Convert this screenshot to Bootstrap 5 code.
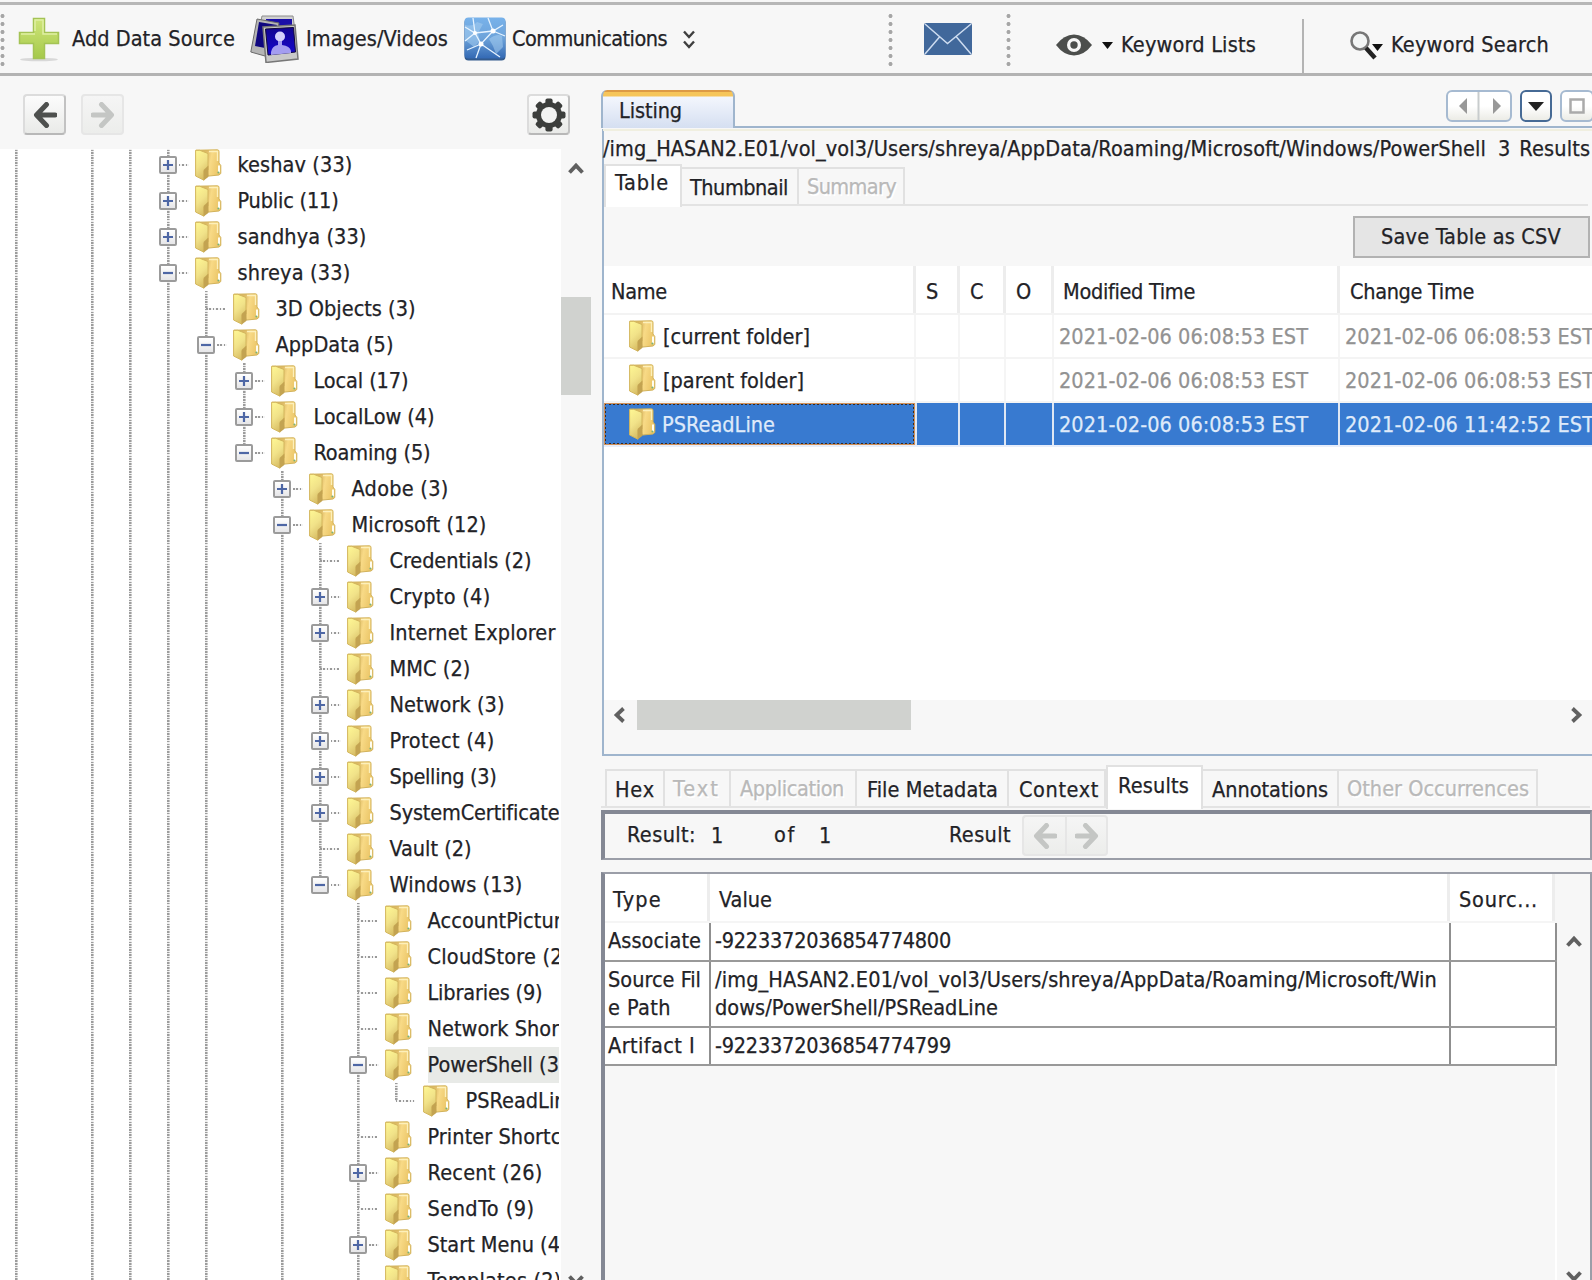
<!DOCTYPE html>
<html lang="en">
<head>
<meta charset="utf-8">
<title>Autopsy</title>
<link href="https://cdn.jsdelivr.net/npm/bootstrap@5.3.0/dist/css/bootstrap.min.css" rel="stylesheet">
<style>
body{width:1592px;height:1280px;overflow:hidden;background:#f7f7f7;color:#222226;font:21.5px/28px "DejaVu Sans Condensed","DejaVu Sans",sans-serif;font-stretch:condensed;white-space:nowrap}
svg{display:block;flex:none}
.t{display:inline-block;line-height:28px;-webkit-text-stroke:.25px currentColor}
.dim{color:#b9b9b9;text-shadow:1.5px 1.5px #fff}
/* toolbar */
.toolbar{margin-top:2px;border-top:3px solid #b7b7b7;border-bottom:3px solid #b3b3b3;height:74px;display:grid;grid-template-columns:18px 54px 178px 56px 158px 48px 171px 205px 36px 82px 50px 65px 181px 48px 41px 1fr;align-items:center}
.toolbar>*{height:66px;display:flex;align-items:center}
.toolbar>.grip{background:radial-gradient(circle,#a6a6a6 1.7px,transparent 2.3px) 0 0/5px 8px repeat-y;height:56px;align-self:start;margin-top:7px}
.toolbar>.low{padding-top:12px}
.toolbar>.vsep{width:2px;background:#b4b4b4;height:54px;align-self:end}
/* left side */
.side{width:601px;flex:none}
.side-head{height:73px;padding:18px 31px 0 23px}
.ibtn{width:43px;height:41px;border:2px solid #dcdcdc;border-right-color:#c2c2c2;border-bottom-color:#b8b8b8;border-radius:4px;background:linear-gradient(#fcfcfc,#e9eae8);display:flex;align-items:center;justify-content:center}
.ibtn.off{border-color:#e6e6e6;background:linear-gradient(#f5f5f5,#ecedeb)}
.arr-on{color:#4e504e}
.arr-off{color:#c4c6c4}
.flip-x{transform:scaleX(-1)}
.flip-y{transform:scaleY(-1)}
.tree{width:561px;height:1131px;overflow:hidden;background:#fff;border-right:2px solid #fff}
.tree-rows{margin:-2px 0 0 -3px}
.trow{height:36px;display:flex;align-items:center}
.cell{width:38px;height:36px;flex:none;display:flex;align-items:center;background-repeat:no-repeat}
.ln{background-image:repeating-linear-gradient(to bottom,#9c9c9c 0 1.5px,#eee 1.5px 2.571px);background-size:2.6px 100%;background-position:17.7px 0}
.ln.half{background-size:2.6px 18px}
.dots{height:2px;flex:none;background:repeating-linear-gradient(to right,#999 0 1.5px,#f4f4f4 1.5px 3.4px)}
.stub{width:19px;margin-left:19px}
.dash3{width:10px;margin-left:2px}
.box{width:18px;height:18px;border:2px solid #9b9b9b;border-radius:2px;background:linear-gradient(#fff,#e6e6e8);margin-left:9.500px;flex:none}
.leafdir{margin-left:8px}
.lbl{margin-left:15.500px;height:36px;line-height:35px;flex:none}
.lbl .t{line-height:35px}
.lbl.on{background:#e8eae7}
.vbar{width:30px;height:1131px;overflow:hidden}
.vthumb{height:98px;margin-top:123px;background:#d0d2cf;flex:none}
/* right side */
.work{width:991px;flex:none}
.tabstrip{height:53px;padding-top:14px}
.doc-tab{width:134px;height:38px;border:2px solid #9fb5cd;border-bottom:0;border-top:0;border-radius:6px 6px 0 0;background:linear-gradient(#dd9a45 0 2px,#f6c55a 2px 6px,#f3f6fd 7px,#d5dff1 100%);padding:6.500px 0 0 16px}
.tab-rest{border-bottom:2px solid #9fb5cd;flex:1;height:38px}
.navb{height:32px;border:2px solid #a6bad1;border-radius:6px;background:linear-gradient(#fff 50%,#ecece6);display:flex;align-items:center;justify-content:center}
.listing{border-left:2px solid #9fb5cd;border-bottom:2px solid #9fb5cd;height:627px;margin-left:1px}
.pathline{height:36px;padding-top:4px;border-top:2px solid #f0efe0;margin-left:-1px}
.subtabs{display:flex;align-items:flex-end;border-bottom:2px solid #e3e3e3}
.stab{border:2px solid #e1e1e1;border-left:0;border-bottom:0;height:37px;flex:none}
.stab.act{background:#fff;height:43px;margin-bottom:-3px;border-left:2px solid #e1e1e1}
.csv{width:237px;height:42px;border:2px solid #b2b2b2;background:#e5e5e5;border-radius:0;padding:0 0 1px 26px;margin:0 2px 8px auto}
.csv .t{line-height:34px}
.grid-h,.grid-r{display:grid;grid-template-columns:312px 44px 46px 48px 286px 1fr}
.grid-h{height:49px;background:#fff;border-bottom:2px solid #f3f3f3}
.grid-h>div{border-right:3px solid #ededed;padding:12px 0 0 10px;overflow:hidden}
.grid-h>div:last-child,.grid-r>div:last-child{border-right:0}
.grid-r{height:44px;background:#fff;border-bottom:2px solid #f4f4f4}
.grid-r>div{border-right:2px solid #f5f5f5;padding:8px 0 0 5px;overflow:hidden}
.grid-r>div:first-child{padding:5px 0 0 25px;display:flex;gap:7px}
.grid-r .t{color:#929292}
.grid-r .nm{color:#222226;margin-top:3px}
.grid-r.sel{background:#387ad0;border-bottom-color:#e8eefa}
.grid-r.sel>div{border-right-color:#dfe7f3}
.grid-r.sel .t{color:#dfeafa}
.grid-r.sel>div:first-child{border:2px dotted #3a2a20;outline:1px solid #d09058;outline-offset:-1px;padding:3px 0 0 23px;gap:6px;box-shadow:2px 0 #dfe7f3;margin-right:1px;overflow:visible}
.hbar{height:54px;background:#f7f7f7;padding-left:9px}
.lower{padding-top:11px}
.resbar{height:50px;border:2px solid #9b9ea8;border-top:4px solid #848894;border-left:4px solid #848894;display:grid;grid-template-columns:106px 61px 47px 108px 73px 43px 43px;margin-top:2px;padding-left:22px}
.resbox{border:2px solid #9b9ea8;border-left:4px solid #848894;border-bottom:0;margin-top:12px;height:412px}
.rh{height:49px;width:950px;background:#fff;display:grid;grid-template-columns:105px 740px 105px;border-bottom:2px solid #f5f5f5}
.rh>div{border-right:3px solid #ededed;padding:12px 0 0 9px}
.rh>div:first-child{padding-left:8px}
.rr{width:952px;background:#fff;display:grid;grid-template-columns:106px 740px 106px;border-bottom:2px solid #999}
.rr>div{border-right:2px solid #8f8f8f;padding:4px 0 0 3px}
.rr>div+div{padding-left:4px}
</style>
<script src="https://cdn.jsdelivr.net/npm/bootstrap@5.3.0/dist/js/bootstrap.bundle.min.js"></script>
</head>
<body>
<svg width="0" height="0" class="position-absolute">
<defs>
<linearGradient id="fa" x1="0" y1="0" x2="0.4" y2="1"><stop offset="0" stop-color="#fff894"/><stop offset=".55" stop-color="#f1e289"/><stop offset="1" stop-color="#d9bf66"/></linearGradient>
<linearGradient id="fb" x1="0" y1="0" x2="1" y2="0.2"><stop offset="0" stop-color="#c9a950"/><stop offset=".45" stop-color="#dfbc68"/><stop offset=".65" stop-color="#f8da86"/><stop offset="1" stop-color="#ecc76a"/></linearGradient>
<linearGradient id="gp" x1="0" y1="0" x2="0" y2="1"><stop offset="0" stop-color="#cfe57a"/><stop offset="1" stop-color="#a5c94a"/></linearGradient>
<linearGradient id="gb" x1="0" y1="0" x2="0" y2="1"><stop offset="0" stop-color="#78b2ea"/><stop offset=".5" stop-color="#6da3da"/><stop offset="1" stop-color="#3369b4"/></linearGradient>
<linearGradient id="gi" x1="0" y1="0" x2="0" y2="1"><stop offset="0" stop-color="#12058f"/><stop offset="1" stop-color="#1608cf"/></linearGradient>
<symbol id="folder" viewBox="0 0 27 32"><path d="M1 1.200 22.500.8Q24 .8 24 2.500V14l1.800 2.500v8L24 26l-10 1L8 25z" fill="url(#fb)" stroke="#d2b25a" stroke-width="1"/><path d="M14 2.500h8.500V12" fill="none" stroke="#fdf0ba" stroke-width="1.400"/><path d="M.6 1.300h4.200L13 4.500v16.500L9 22v9.200L.6 27z" fill="url(#fa)" stroke="#d3b65c" stroke-width="1"/><path d="M13.400 16.500 8.600 21v10.400l5-3.600z" fill="#c3a351"/><path d="M24 16.500v7" stroke="#fffdf0" stroke-width="2"/><circle cx="23.400" cy="23.500" r="1" fill="#79b27a"/></symbol>
<symbol id="up" viewBox="0 0 16 12"><path d="M1.500 10.500 8 3.600l6.500 6.900" fill="none" stroke="#606060" stroke-width="3.800"/></symbol>
<symbol id="back" viewBox="0 0 24 26"><path d="M22 13H4M13.500 2.500 3.500 13l10 10.500" fill="none" stroke="currentColor" stroke-width="5" stroke-linecap="round" stroke-linejoin="round"/></symbol>
</defs>
</svg>

<header class="toolbar">
  <div class="grip"></div>
  <div><svg width="42" height="46" viewBox="0 0 42 46"><ellipse cx="21" cy="43.500" rx="19" ry="1.800" fill="#d8d8d8"/><path d="M15.500 2.500h11v14h14v11h-14v15h-11v-15h-14v-11h14z" fill="url(#gp)" stroke="#a4c355" stroke-width="1.500"/><path d="M17 15V4h8v14h14M3 18h14" fill="none" stroke="#e0f0a4" stroke-width="1.500"/></svg></div>
  <div><span class="t" data-w="163">Add Data Source</span></div>
  <div><svg width="49" height="48" viewBox="0 0 49 48"><path d="M12 1 43 1 45 16 9 15z" fill="#cfcfcf" stroke="#8d8d8d"/><path d="M16 4 42 4v9H16z" fill="#1b0fa8"/><path d="M7 4 29 8 22 43 .8 37z" fill="#b5b5b5" stroke="#6b6b6b"/><path d="M9 7 27 10 20 34 5 31z" fill="#0f067f"/><path d="M13 12 45 10 48 44 16 47.500z" fill="#c9c9c9" stroke="#777" stroke-width="1.500"/><path d="M15.500 14 43.500 12.500 45.500 37 18 40z" fill="url(#gi)" stroke="#120838"/><circle cx="30" cy="21.500" r="5" fill="#d5d2fb"/><path d="M28 26h4v4q8 1 9 6v2l-20 2v-3q1-6 7-7z" fill="#a39df0"/></svg></div>
  <div><span class="t" data-w="142">Images/Videos</span></div>
  <div><svg width="42" height="44" viewBox="0 0 42 44"><rect x=".5" y="1.500" width="41" height="42" rx="4" fill="#335b8e"/><rect x=".5" y=".5" width="41" height="41" rx="4" fill="url(#gb)"/><path d="M1 8q8 2 12-3l6 2-5 9 2 8-6 6-9-7zM25 22q8-6 13-3l1 11-7 7-3-8z" fill="#a6cdf0" opacity=".55"/><path d="M1 10 11 16 29 14 39 8M11 16 9 1M11 16 17 27 29 14 24 1M17 27 3 33M17 27 12 41M17 27 36 40M29 14 41 19M11 16 1 24" fill="none" stroke="#e6f3ff" stroke-width="1.300"/><g fill="#fff"><circle cx="11" cy="16" r="2"/><circle cx="29" cy="14" r="2.500"/><circle cx="17" cy="27" r="2.500"/></g></svg></div>
  <div><span class="t" data-w="155">Communications</span></div>
  <div><svg width="12" height="19" viewBox="0 0 12 19"><path d="m1 1.500 5 5.500 5-5.500M1 11.500l5 5.500 5-5.500" fill="none" stroke="#404040" stroke-width="2.400"/></svg></div>
  <div class="grip"></div>
  <div><svg width="48" height="32" viewBox="0 0 48 32"><rect width="48" height="32" rx="2" fill="#41689b"/><path d="m1 1 22.500 19.500L47 1M1 31l14.500-17M47 31 32.500 14" fill="none" stroke="#cddcf0" stroke-width="1.500"/></svg></div>
  <div class="grip"></div>
  <div class="low"><svg width="36" height="22" viewBox="0 0 36 22"><path d="M0 11Q8 .5 18 .5T36 11Q28 21.500 18 21.500T0 11z" fill="#4c4e4c"/><circle cx="18" cy="11" r="7" fill="#f7f7f7"/><circle cx="18" cy="11" r="3.700" fill="#4c4e4c"/></svg><svg class="ms-auto me-2" width="11" height="7"><path d="M0 0h11L5.500 7z" fill="#111"/></svg></div>
  <div class="low"><span class="t" data-w="135">Keyword Lists</span></div>
  <div class="vsep"></div>
  <div class="low"><svg width="34" height="29" viewBox="0 0 34 29"><circle cx="10" cy="10" r="8.500" fill="#f3f5f5" stroke="#777" stroke-width="2.600"/><path d="m16 17 9 10" stroke="#222" stroke-width="4.500"/><path d="M22 13h11l-5.500 7z" fill="#111"/></svg></div>
  <div class="low"><span class="t" data-w="158">Keyword Search</span></div>
</header>

<main class="d-flex">
<aside class="side">
  <div class="side-head d-flex">
    <div class="ibtn arr-on"><svg width="24" height="26"><use href="#back"/></svg></div>
    <div class="ibtn off arr-off" style="margin-left:15px"><svg class="flip-x" width="24" height="26"><use href="#back"/></svg></div>
    <div class="ibtn ms-auto"><svg width="34" height="34" viewBox="-17 -17 34 34"><g fill="#3c3e3c"><g id="tooth"><rect x="-3.600" y="-16.500" width="7.200" height="33" rx="2"/><rect x="-16.500" y="-3.600" width="33" height="7.200" rx="2"/></g><use href="#tooth" transform="rotate(45)"/><circle r="13"/></g><circle r="8" fill="#f2f3f2"/></svg></div>
  </div>
  <div class="d-flex">
    <div class="tree"><div class="tree-rows" id="tree"></div></div>
    <div class="vbar d-flex flex-column align-items-center">
      <svg width="16" height="12" style="margin-top:13px"><use href="#up"/></svg>
      <div class="vthumb w-100"></div>
      <svg class="flip-y" width="16" height="12" style="margin-top:880px"><use href="#up"/></svg>
    </div>
  </div>
</aside>

<section class="work">
  <div class="tabstrip d-flex">
    <div class="doc-tab"><span class="t" data-w="63">Listing</span></div>
    <div class="tab-rest d-flex justify-content-end">
      <div class="navb" style="width:66px"><svg width="52" height="28" viewBox="0 0 52 28"><path d="M14 6v16L6 14zM40 6v16l8-8z" fill="#989898"/><path d="M25.500 0v28" stroke="#c8cccd" stroke-width="2"/></svg></div>
      <div class="navb" style="width:32px;margin-left:8px;border-color:#466a95"><svg width="16" height="9"><path d="M0 0h16L8 9z" fill="#222"/></svg></div>
      <div class="navb" style="width:34px;margin-left:8px;margin-right:-2px"><svg width="17" height="17"><rect x="1.500" y="1.500" width="13" height="13" fill="none" stroke="#aaa" stroke-width="2.500"/></svg></div>
    </div>
  </div>
  <div class="listing">
    <div class="pathline"><span class="t" data-w="883">/img_HASAN2.E01/vol_vol3/Users/shreya/AppData/Roaming/Microsoft/Windows/PowerShell</span><span class="t" style="margin-left:12px">3</span><span class="t" data-w="71" style="margin-left:9px">Results</span></div>
    <div class="subtabs" style="height:41px;margin-right:4px">
      <div class="stab act" style="width:78px;padding:3px 0 0 9px"><span class="t" data-w="54">Table</span></div>
      <div class="stab" style="width:117px;padding:5px 0 0 8px"><span class="t" data-w="98">Thumbnail</span></div>
      <div class="stab" style="width:106px;padding:4px 0 0 8px"><span class="t dim" data-w="89">Summary</span></div>
    </div>
    <div style="height:10px"></div>
    <button class="csv d-block text-start text-reset"><span class="t" data-w="180">Save Table as CSV</span></button>
    <div class="grid-h"><div style="padding-left:7px"><span class="t" data-w="56">Name</span></div><div><span class="t" data-w="14">S</span></div><div><span class="t" data-w="15">C</span></div><div><span class="t" data-w="17">O</span></div><div style="padding-left:9px"><span class="t" data-w="132">Modified Time</span></div><div><span class="t" data-w="124">Change Time</span></div></div>
    <div class="grid-r"><div><svg width="27" height="32"><use href="#folder"/></svg><span class="t nm" data-w="147">[current folder]</span></div><div></div><div></div><div></div><div><span class="t" data-w="249">2021-02-06 06:08:53 EST</span></div><div><span class="t" data-w="249">2021-02-06 06:08:53 EST</span></div></div>
    <div class="grid-r"><div><svg width="27" height="32"><use href="#folder"/></svg><span class="t nm" data-w="141">[parent folder]</span></div><div></div><div></div><div></div><div><span class="t" data-w="249">2021-02-06 06:08:53 EST</span></div><div><span class="t" data-w="249">2021-02-06 06:08:53 EST</span></div></div>
    <div class="grid-r sel"><div><svg width="27" height="32"><use href="#folder"/></svg><span class="t nm" data-w="113">PSReadLine</span></div><div></div><div></div><div></div><div><span class="t" data-w="249">2021-02-06 06:08:53 EST</span></div><div><span class="t" data-w="249">2021-02-06 11:42:52 EST</span></div></div>
    <div class="bg-white" style="height:253px"></div>
    <div class="hbar d-flex"><svg width="12" height="16" viewBox="0 0 12 16" style="margin-top:7px"><path d="M10.500 1.500 3.600 8l6.900 6.500" fill="none" stroke="#606060" stroke-width="3.800"/></svg><div style="width:274px;height:30px;margin-left:12px;background:#d0d2cf"></div><svg class="ms-auto" width="12" height="16" viewBox="0 0 12 16" style="margin-top:7px;margin-right:9px"><path d="M1.500 1.500 8.400 8l-6.900 6.500" fill="none" stroke="#606060" stroke-width="3.800"/></svg></div>
  </div>

  <div class="lower">
    <div class="subtabs" style="height:41px;padding-left:4px;margin-right:2px">
      <div class="stab" style="width:60px;border-left:2px solid #e1e1e1;padding:5px 0 0 8px"><span class="t" data-w="40">Hex</span></div>
      <div class="stab" style="width:66px;padding:4px 0 0 8px"><span class="t dim" data-w="47">Text</span></div>
      <div class="stab" style="width:126px;padding:4px 0 0 9px"><span class="t dim" data-w="104">Application</span></div>
      <div class="stab" style="width:152px;padding:5px 0 0 10px"><span class="t" data-w="131">File Metadata</span></div>
      <div class="stab" style="width:97px;padding:5px 0 0 10px"><span class="t" data-w="80">Context</span></div>
      <div class="stab act" style="width:97px;padding:5px 0 0 10px;height:44px"><span class="t" data-w="71">Results</span></div>
      <div class="stab" style="width:136px;padding:5px 0 0 9px"><span class="t" data-w="116">Annotations</span></div>
      <div class="stab" style="width:199px;padding:4px 0 0 8px"><span class="t dim" data-w="182">Other Occurrences</span></div>
    </div>
    <div class="resbar">
      <div class="d-flex pt-1"><span class="t mt-1 pt-0" style="line-height:26px" data-w="69">Result:</span><span class="t mt-1" style="margin-left:15px">1</span></div>
      <div style="padding:7px 0 0 41px"><span class="t" style="line-height:27px" data-w="22">of</span></div>
      <div style="padding:8px 0 0 25px"><span class="t">1</span></div>
      <div></div>
      <div style="padding-top:7px"><span class="t" style="line-height:27px" data-w="62">Result</span></div>
      <div class="ibtn off arr-off" style="border-radius:4px 0 0 4px;border-right:0;margin-top:1px"><svg width="24" height="26"><use href="#back"/></svg></div>
      <div class="ibtn off arr-off" style="border-radius:0 4px 4px 0;margin-top:1px"><svg class="flip-x" width="24" height="26"><use href="#back"/></svg></div>
    </div>
    <div class="resbox d-flex">
      <div>
        <div class="rh"><div><span class="t" data-w="49">Type</span></div><div><span class="t" data-w="53">Value</span></div><div><span class="t" data-w="79">Sourc...</span></div></div>
        <div class="rr" style="height:39px"><div><span class="t" data-w="93">Associate</span></div><div><span class="t" data-w="236">-9223372036854774800</span></div><div></div></div>
        <div class="rr" style="height:66px"><div><span class="t" data-w="93">Source Fil</span><br><span class="t" data-w="63">e Path</span></div><div><span class="t" data-w="722">/img_HASAN2.E01/vol_vol3/Users/shreya/AppData/Roaming/Microsoft/Win</span><br><span class="t" data-w="283">dows/PowerShell/PSReadLine</span></div><div></div></div>
        <div class="rr" style="height:38px"><div><span class="t" data-w="87">Artifact I</span></div><div><span class="t" data-w="236">-9223372036854774799</span></div><div></div></div>
        <div style="height:220px;border-right:2px solid #fff"></div>
      </div>
      <div class="d-flex flex-column" style="padding-left:9px"><svg width="16" height="12" style="margin-top:61px"><use href="#up"/></svg><svg class="flip-y" width="16" height="12" style="margin-top:324px"><use href="#up"/></svg></div>
    </div>
  </div>
</section>
</main>
<script>
// [depth, kind, label, width]; kind: + collapsed, - expanded, . leaf
const nodes=[[0,'+','keshav (33)',115],[0,'+','Public (11)',101],[0,'+','sandhya (33)',129],[0,'-','shreya (33)',113],[1,'.','3D Objects (3)',140],[1,'-','AppData (5)',118],[2,'+','Local (17)',95],[2,'+','LocalLow (4)',121],[2,'-','Roaming (5)',117],[3,'+','Adobe (3)',97],[3,'-','Microsoft (12)',135],[4,'.','Credentials (2)',142],[4,'+','Crypto (4)',101],[4,'+','Internet Explorer',166],[4,'.','MMC (2)',81],[4,'+','Network (3)',115],[4,'+','Protect (4)',105],[4,'+','Spelling (3)',107],[4,'+','SystemCertificates',180],[4,'.','Vault (2)',82],[4,'-','Windows (13)',133],[5,'.','AccountPictures',156],[5,'.','CloudStore (2)',143],[5,'.','Libraries (9)',115],[5,'.','Network Shortcuts',180],[5,'-','PowerShell (3)',139],[6,'.','PSReadLine',113],[5,'.','Printer Shortcuts',164],[5,'+','Recent (26)',115],[5,'.','SendTo (9)',107],[5,'+','Start Menu (4)',140],[5,'.','Templates (2)',134]];
// columns whose guide runs past the last visible row (two outer ancestors, then depths 0, 1, 3, 5)
const openEnded=[0,2,3,4,5,7,9];
document.getElementById('tree').innerHTML=nodes.map(([d,kind,label,w],i)=>{
  const laterAt=c=>{const n=nodes.slice(i+1).find(n=>n[0]<=c-4);return !!n&&n[0]===c-4};
  const runs=c=>openEnded.includes(c)||(c>=4&&laterAt(c));
  let cells='';
  for(let c=0;c<4+d;c++)cells+=`<div class="cell${runs(c)?' ln':''}"></div>`;
  const handle=kind==='.'
    ?'<div class="dots stub"></div>'
    :`<div class="box"><svg width="14" height="14"><path d="M2 7h10${kind==='+'?'M7 2v10':''}" stroke="#4e67a5" stroke-width="2.200"/></svg></div><div class="dots dash3"></div>`;
  return `<div class="trow">${cells}<div class="cell ln${runs(4+d)?'':' half'}">${handle}</div><svg class="leafdir" width="27" height="32"><use href="#folder"/></svg><div class="lbl${label.startsWith('PowerShell')?' on':''}"><span class="t" data-w="${w}">${label}</span></div></div>`;
}).join('');
// even tracking so each label takes its nominal width
document.querySelectorAll('[data-w]').forEach(e=>{
  e.style.letterSpacing=((+e.dataset.w-e.getBoundingClientRect().width)/e.textContent.length)+'px';
});
</script>
</body>
</html>
